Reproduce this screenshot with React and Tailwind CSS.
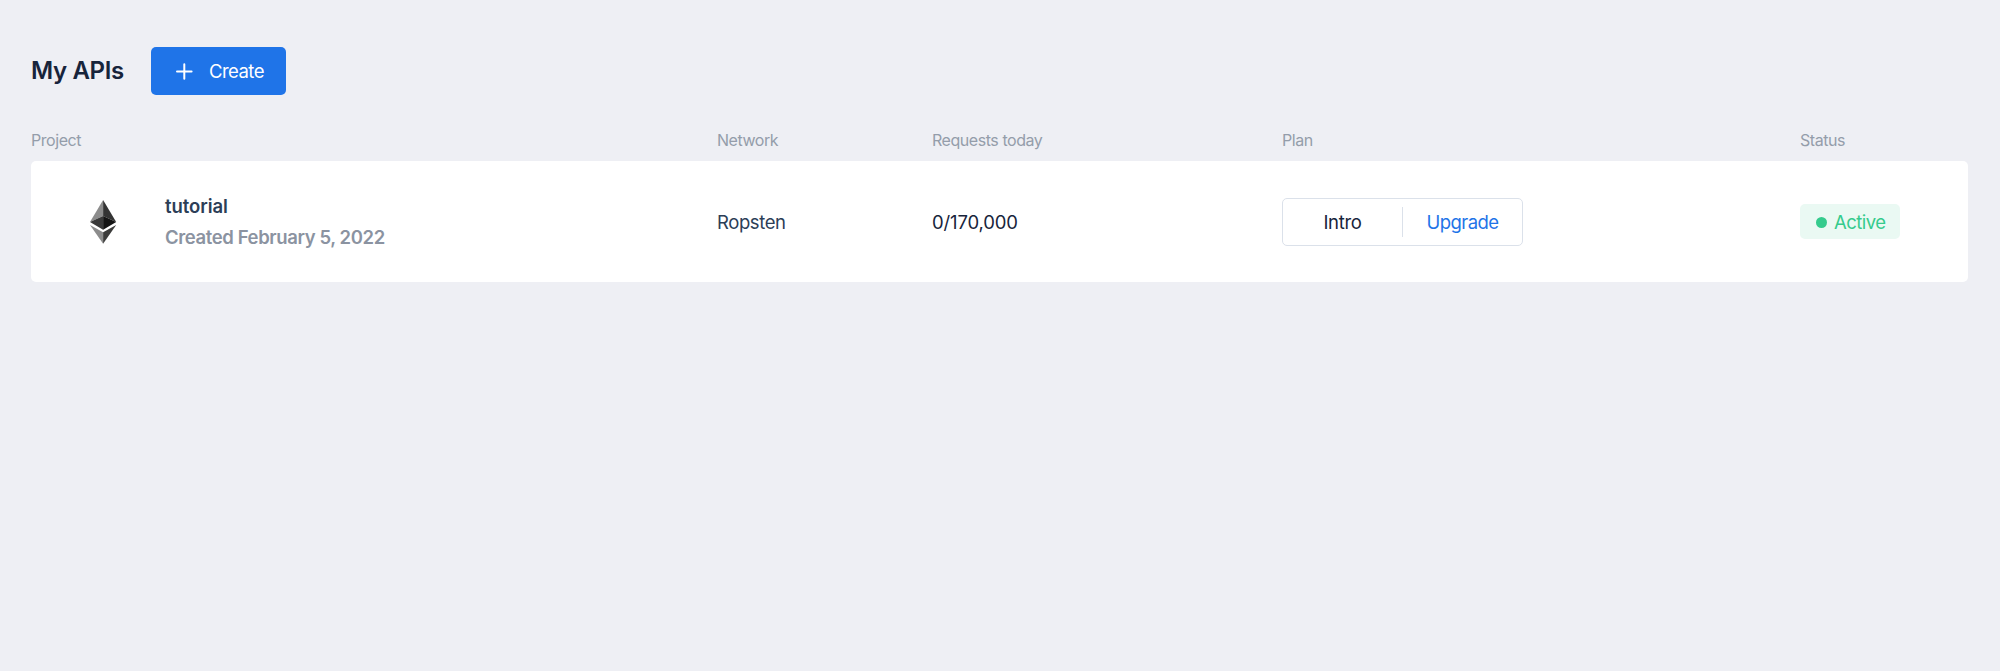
const columns = 'grid grid-cols-[686px_215px_350px_518px_1fr]';

function EthereumIcon() {
  return (
    <svg width="27" height="44" viewBox="0 0 27 44" aria-hidden="true">
      <path fill="#8c8c8c" d="M13.1 0 0 21.9 13.1 16Z" />
      <path fill="#343434" d="M13.1 0v16l13.1 5.9Z" />
      <path fill="#393939" d="M0 21.9 13.1 16v13.7Z" />
      <path fill="#141414" d="M13.1 16v13.7l13.1-7.8Z" />
      <path fill="#8c8c8c" d="M0 24.9 13.1 32.3v11.5Z" />
      <path fill="#3c3c3b" d="M13.1 32.3v11.5L26.2 24.9Z" />
    </svg>
  );
}

function PageHeader() {
  return (
    <header className="flex h-12 items-center">
      <h1 className="w-[120px] whitespace-nowrap text-[24px] font-semibold leading-[46px] text-[#17243b]">
        <span className="tracking-[-0.35px]">My APIs</span>
      </h1>
      <button className="flex h-12 w-[135px] items-center rounded-[5px] bg-[#1f74e8] pl-[25px] text-[18.5px] text-white">
        <svg width="17" height="17" viewBox="0 0 17 17" stroke="currentColor" strokeWidth="2" strokeLinecap="round">
          <path d="M8.3 1.2v14.6M1 8.5h14.6" />
        </svg>
        <span className="ml-4 pt-0.5 tracking-[-0.55px]">Create</span>
      </button>
    </header>
  );
}

function ProjectRow() {
  return (
    <div className={`${columns} h-[121px] items-center rounded-[5px] bg-white text-[18.5px]`}>
      <div className="flex items-center pl-[59px]">
        <EthereumIcon />
        <div className="ml-12 font-semibold leading-[31px]">
          <div className="tracking-[-0.05px] text-[#2c3e57]">tutorial</div>
          <div className="tracking-[-0.39px] text-[#8b93a1]">Created February 5, 2022</div>
        </div>
      </div>
      <div className="pt-0.5 tracking-[-0.4px] text-[#2c3e57]">Ropsten</div>
      <div className="pt-0.5 tracking-[-0.15px] text-[#17243b]">0/170,000</div>
      <div>
        <div className="mt-px flex h-12 w-[241px] items-center rounded-[5px] border border-[#dbe1ea]">
          <span className="flex-1 pt-px text-center tracking-[-0.3px] text-[#17243b]">Intro</span>
          <span className="h-[30px] w-px bg-[#dbe1ea]" />
          <span className="flex-1 pt-px text-center tracking-[-0.55px] text-[#1f74e8]">Upgrade</span>
        </div>
      </div>
      <div>
        <div className="flex h-[35px] w-[100px] items-center rounded-[5px] bg-[#eaf9f3] pl-4 text-[#35cb8d]">
          <span className="mt-0.5 size-[11px] rounded-full bg-[#35cb8d]" />
          <span className="ml-[7px] pt-0.5 tracking-[-0.55px]">Active</span>
        </div>
      </div>
    </div>
  );
}

export default function App() {
  return (
    <main className="h-[671px] bg-[#eeeff4] pl-[31px] pr-8 pt-[47px] font-['Inter','Liberation_Sans',sans-serif]">
      <PageHeader />
      <div className={`${columns} mt-[33px] h-[33px] text-[16px] leading-[24px] tracking-[-0.45px] text-[#949daa]`}>
        <span>Project</span>
        <span>Network</span>
        <span>Requests today</span>
        <span>Plan</span>
        <span>Status</span>
      </div>
      <ProjectRow />
    </main>
  );
}
